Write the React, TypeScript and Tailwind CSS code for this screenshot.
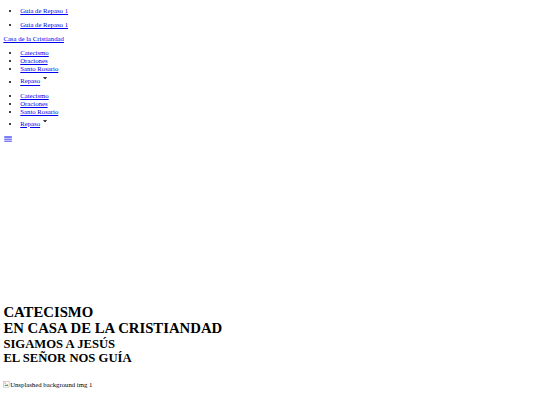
import React from "react";

const linkCls = "text-[#0000ee] underline";

function Caret() {
  return (
    <span className="inline-block w-[24px] h-[24px] align-baseline">
      <svg viewBox="0 0 24 24" width="24" height="24" className="block">
        <path d="M7 10l5 5 5-5z" fill="#000" />
      </svg>
    </span>
  );
}

function NavList() {
  return (
    <ul className="list-disc pl-[40px] my-[14.5px]">
      <li><a className={linkCls} href="#">Catecismo</a></li>
      <li><a className={linkCls} href="#">Oraciones</a></li>
      <li><a className={linkCls} href="#">Santo Rosario</a></li>
      <li>
        <a className={linkCls} href="#">Repaso</a>
        <Caret />
      </li>
    </ul>
  );
}

export default function App() {
  return (
    <div className="bg-white min-h-screen">
      <div className="[zoom:0.421875] w-[1280px] px-[8px] pt-[2px] pb-[8px] font-['Liberation_Serif',serif] text-[16px] leading-[19px] text-black">
        <ul className="list-disc pl-[40px] mt-[14.5px] mb-[14.5px]">
          <li><a className={linkCls} href="#">Guía de Repaso 1</a></li>
        </ul>
        <ul className="list-disc pl-[40px] my-[14.5px]">
          <li><a className={linkCls} href="#">Guía de Repaso 1</a></li>
        </ul>
        <div>
          <a className={linkCls} href="#">Casa de la Cristiandad</a>
        </div>
        <NavList />
        <NavList />
        <div className="text-[#0000ee]">
          <svg viewBox="0 0 24 24" width="24" height="24" className="block">
            <path d="M3 18h18v-2H3v2zm0-5h18v-2H3v2zm0-7v2h18V6H3z" fill="currentColor" />
          </svg>
        </div>
        <div className="pt-[378px]">
          <h1 className="text-[35px] font-bold leading-[40px]">
            CATECISMO
            <br />
            EN CASA DE LA CRISTIANDAD
          </h1>
          <h2 className="mt-[2px] text-[30px] font-bold leading-[33px]">
            SIGAMOS A JESÚS
            <br />
            EL SEÑOR NOS GUÍA
          </h2>
        </div>
        <div className="mt-[35px] flex items-center">
          <svg viewBox="0 0 16 16" width="16" height="16" className="inline-block">
            <rect x="1.5" y="1.5" width="13" height="13" fill="#fff" stroke="#999" />
            <path d="M3 12l3-4 2 2 2-3 3 5z" fill="#5a9a4a" />
            <circle cx="5" cy="5" r="1.3" fill="#c33" />
          </svg>
          <span>Unsplashed background img 1</span>
        </div>
      </div>
    </div>
  );
}
